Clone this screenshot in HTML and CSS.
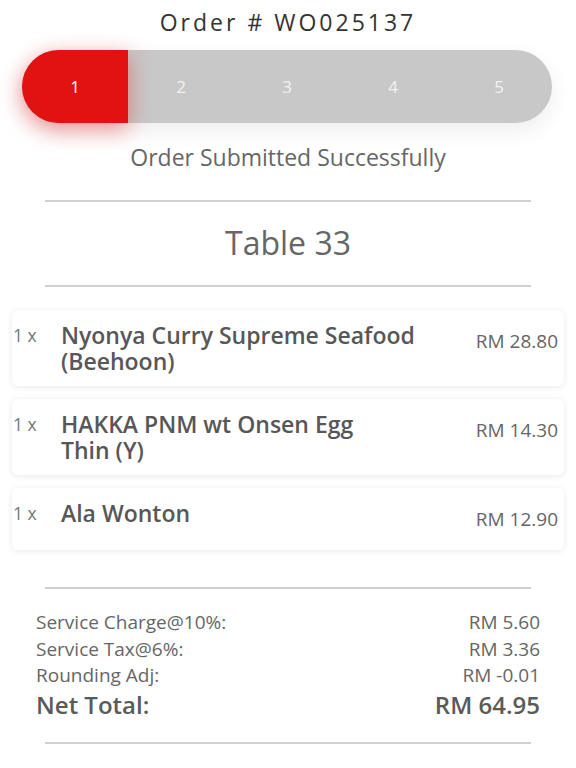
FILE: index.html
```html
<!DOCTYPE html>
<html lang="en">
<head>
  <meta charset="UTF-8">
  <meta name="viewport" content="width=device-width, initial-scale=1.0">
  <title>Order WO025137</title>
  <link rel="stylesheet" href="styles.css">
</head>
<body>
  <h1 class="order-title">Order # WO025137</h1>

  <div class="stepper">
    <div class="step active">1</div>
    <div class="step">2</div>
    <div class="step">3</div>
    <div class="step">4</div>
    <div class="step">5</div>
  </div>

  <div class="status">Order Submitted Successfully</div>
  <hr class="divider">
  <div class="table-name">Table 33</div>
  <hr class="divider">

  <div class="items">
    <div class="item">
      <div class="qty">1 x</div>
      <div class="name">Nyonya Curry Supreme Seafood (Beehoon)</div>
      <div class="price">RM 28.80</div>
    </div>
    <div class="item">
      <div class="qty">1 x</div>
      <div class="name">HAKKA PNM wt Onsen Egg<br>Thin (Y)</div>
      <div class="price">RM 14.30</div>
    </div>
    <div class="item">
      <div class="qty">1 x</div>
      <div class="name">Ala Wonton</div>
      <div class="price">RM 12.90</div>
    </div>
  </div>

  <hr class="divider">

  <div class="summary">
    <div class="row"><span>Service Charge@10%:</span><span>RM 5.60</span></div>
    <div class="row"><span>Service Tax@6%:</span><span>RM 3.36</span></div>
    <div class="row"><span>Rounding Adj:</span><span>RM -0.01</span></div>
    <div class="row total"><span>Net Total:</span><span>RM 64.95</span></div>
  </div>

  <hr class="divider">
</body>
</html>
```

FILE: styles.css
```css
body {
  font-family: 'Open Sans', sans-serif;
  background-color: #ffffff;
  color: #666;
  margin: 0;
}
.order-title {
  font-weight: 400;
  font-size: 23px;
  letter-spacing: 3px;
  color: #333;
  text-align: center;
  margin: 0;
  padding-top: 5px;
  line-height: 34px;
}
.stepper {
  display: flex;
  height: 73px;
  margin: 11px 24px 0 22px;
  background: #c8c8c8;
  border-radius: 37px;
  box-shadow: 0 8px 22px rgba(0,0,0,0.07);
}
.step {
  flex: 1;
  display: flex;
  align-items: center;
  justify-content: center;
  color: #f2f2f2;
  font-size: 17px;
}
.step.active {
  background: #e01212;
  color: #fff;
  border-radius: 37px 0 0 37px;
  box-shadow: 0 6px 22px rgba(230,20,20,0.45);
}
.status {
  text-align: center;
  font-size: 23px;
  line-height: 30px;
  margin-top: 19px;
}
.divider {
  border: none;
  border-top: 2px solid #d0d0d0;
  margin: 0 45px;
}
.status + .divider {
  margin-top: 28px;
}
.table-name {
  text-align: center;
  font-size: 32px;
  line-height: 40px;
  padding: 21px 0 22px;
}
.items {
  padding: 23px 12px 24px;
}
.item {
  display: flex;
  align-items: flex-start;
  min-height: 62px;
  box-sizing: border-box;
  padding: 12px 6px 12px 0;
  margin-bottom: 13px;
  background: #fff;
  border-radius: 6px;
  box-shadow: 0 1px 6px rgba(0,0,0,0.09);
}
.qty {
  width: 48px;
  font-size: 17.5px;
  line-height: 26px;
  color: #777;
  padding-left: 1px;
}
.name {
  width: 366px;
  font-size: 23px;
  font-weight: 600;
  line-height: 26px;
  color: #575757;
}
.price {
  flex: 1;
  text-align: right;
  font-size: 19px;
  line-height: 26px;
  margin-top: 6px;
  color: #666;
}
.summary {
  margin: 0 36px;
  padding: 20px 0 21px;
}
.row {
  display: flex;
  justify-content: space-between;
  font-size: 19px;
  line-height: 26.5px;
}
.row.total {
  font-size: 24px;
  font-weight: 600;
  line-height: 32px;
  color: #5a5a5a;
}
```
